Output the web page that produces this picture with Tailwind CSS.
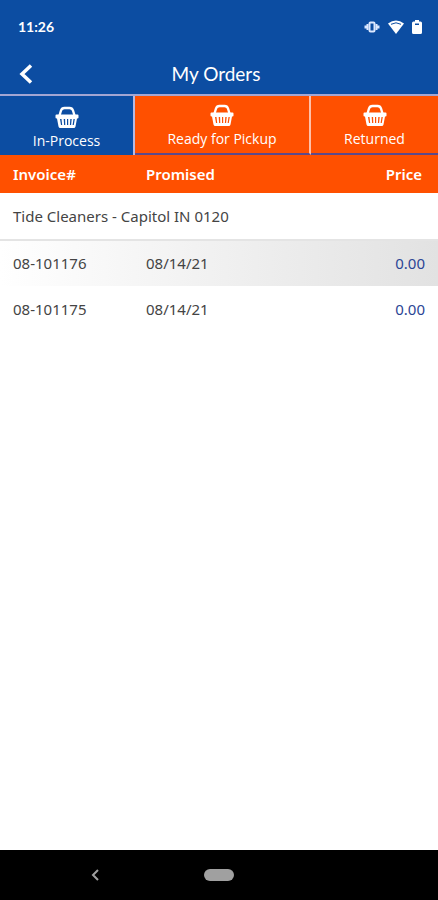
<!DOCTYPE html>
<html lang="en">
<head>
  <meta charset="UTF-8" />
  <meta name="viewport" content="width=device-width, initial-scale=1.0"/>
  <title>My Orders</title>
  <script src="https://cdn.jsdelivr.net/npm/@tailwindcss/browser@4"></script>
</head>
<body class="bg-white text-[#444] font-['Noto_Sans',sans-serif] text-[15px] min-h-screen flex flex-col">

  <!-- Basket icon shared by the tabs -->
  <svg class="hidden">
    <symbol id="basket" viewBox="0 0 24 22">
      <path d="M4.500 9 6 4Q6.800 1.500 9.500 1.500h5Q17.200 1.500 18 4L19.500 9" fill="none" stroke="currentColor" stroke-width="2.400"/>
      <path fill="currentColor" fill-rule="evenodd" d="M1.500 8h21q1 0 1 1v2q0 1-1 1H22L20.500 20q-.3 1.500-1.800 1.500H5.300Q3.800 21.500 3.500 20L2 12h-.5q-1 0-1-1V9q0-1 1-1zM5 12.500l1 6h1.200l-.7-6zM8.700 12.500l.4 6h1.200l-.2-6zM12 12.500v6h1.200v-6zM15.300 12.500l-.4 6h1.200l.6-6zM18.500 12.500l-.9 6h1.200l1-6z"/>
    </symbol>
  </svg>

  <div class="bg-[#0c4da2] text-white">
    <div class="h-[54px] pl-[18px] pr-4 flex items-center justify-between">
      <span class="font-['Lato',sans-serif] text-sm font-bold">11:26</span>
      <div class="flex items-center gap-2">
        <svg class="w-4 h-4" viewBox="0 0 16 16" aria-label="Vibrate">
          <path d="M1.500 6.500v3M3.500 5v6M12.500 5v6M14.500 6.500v3" stroke="#dce8ff" stroke-width="2"/>
          <rect x="5.500" y="3.500" width="5" height="9" rx="1" fill="none" stroke="#dce8ff" stroke-width="2"/>
        </svg>
        <svg class="w-4 h-4" viewBox="0 0 16 16" aria-label="Wi-Fi">
          <path d="M0 4.500Q8-1.500 16 4.500L8 15z" fill="#fff"/>
          <path d="M3 5.300Q8 2.300 13 5.300" fill="none" stroke="#0c4da2" stroke-width="1"/>
        </svg>
        <svg class="w-[10px] h-4" viewBox="0 0 10 16" aria-label="Battery">
          <path d="M3 1h4v1.500h1.500q1.500 0 1.500 1.500V13.500q0 1.500-1.500 1.500h-7q-1.500 0-1.500-1.500V4q0-1.500 1.500-1.500H3z" fill="#fff"/>
          <path d="M3 4.500h4V6H3z" fill="#0c4da2"/>
        </svg>
      </div>
    </div>

    <header class="h-10 px-4 grid grid-cols-[24px_1fr_30px] items-center">
      <button type="button" aria-label="Back" class="h-6 w-6 flex items-center">
        <svg class="w-5 h-5" viewBox="0 0 20 20" fill="none" stroke="currentColor" stroke-width="3.500"><path d="M15 1.500 6 10l9 8.500"/></svg>
      </button>
      <h1 class="text-center font-['Lato',sans-serif] text-[19px] leading-6">My Orders</h1>
    </header>

    <nav class="h-[61px] grid grid-cols-[135fr_176fr_127fr] border-t-2 border-[#a3a6d3] font-['Open_Sans',sans-serif] text-sm leading-5">
      <button type="button" aria-current="page" class="flex flex-col items-center pt-2 border-r-2 border-[#b9b9e0]">
        <svg class="w-6 h-[27px]"><use href="#basket"/></svg>
        In-Process
      </button>
      <button type="button" class="flex flex-col items-center pt-[6px] bg-[#ff5000] border-r-2 border-r-[#ffc0a8] border-b-2 border-b-[#5b4a8c]">
        <svg class="w-6 h-[27px]"><use href="#basket"/></svg>
        Ready for Pickup
      </button>
      <button type="button" class="flex flex-col items-center pt-[6px] bg-[#ff5000] border-b-2 border-b-[#5b4a8c]">
        <svg class="w-6 h-[27px]"><use href="#basket"/></svg>
        Returned
      </button>
    </nav>
  </div>

  <main class="grow">
    <table class="w-full text-left">
      <thead class="bg-[#ff5000] text-white">
        <tr class="h-[38px]">
          <th scope="col" class="w-1/3 pl-[13px] font-semibold">Invoice#</th>
          <th scope="col" class="w-1/3 font-semibold">Promised</th>
          <th scope="col" class="w-1/3 pr-4 text-right font-semibold">Price</th>
        </tr>
      </thead>
      <tbody>
        <tr class="h-[47px] border-b-2 border-[#e4e4e4]">
          <td colspan="3" class="pl-[13px]">Tide Cleaners - Capitol IN 0120</td>
        </tr>
        <tr class="h-[46px] bg-linear-to-r from-white to-[#e2e2e2]">
          <td class="pl-[13px]">08-101176</td>
          <td>08/14/21</td>
          <td class="pr-[13px] text-right text-[#2b4595]">0.00</td>
        </tr>
        <tr class="h-[46px]">
          <td class="pl-[13px]">08-101175</td>
          <td>08/14/21</td>
          <td class="pr-[13px] text-right text-[#2b4595]">0.00</td>
        </tr>
      </tbody>
    </table>
  </main>

  <!-- System navigation -->
  <footer class="h-[50px] px-[88px] bg-black text-[#a0a0a0] grid grid-cols-[1fr_30px_1fr] items-center">
    <button type="button" aria-label="System back" class="justify-self-start">
      <svg class="w-3 h-3" viewBox="0 0 12 12" fill="none" stroke="currentColor" stroke-width="2"><path d="M10 1 5 6l5 5"/></svg>
    </button>
    <button type="button" aria-label="Home" class="h-3 rounded-full bg-[#a0a0a0]"></button>
  </footer>

</body>
</html>
